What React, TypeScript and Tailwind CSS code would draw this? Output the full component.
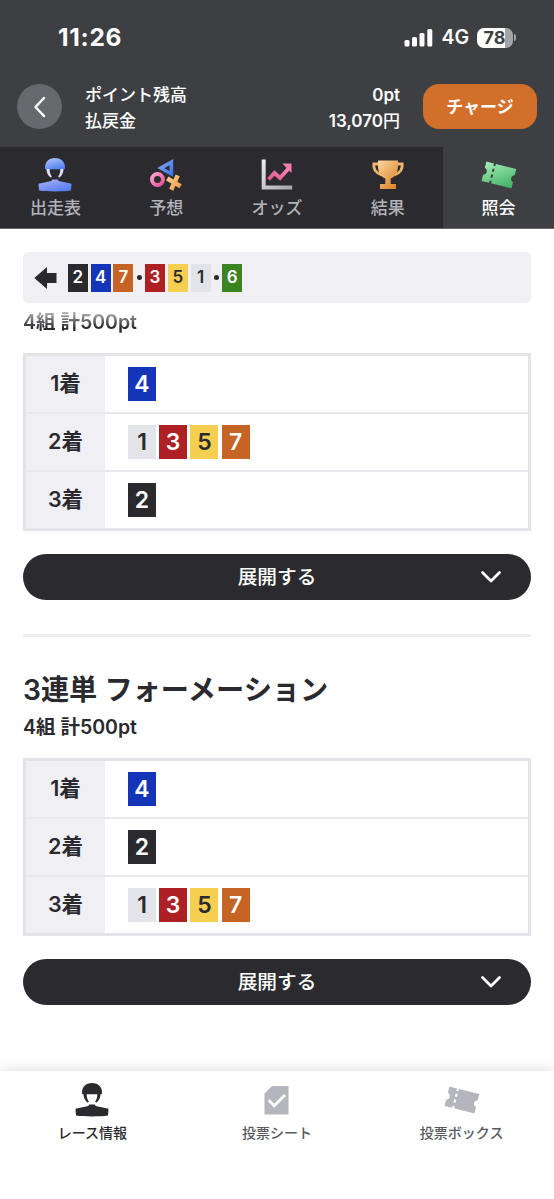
import React from "react";

const tileColors: Record<number, string> = {
  1: "bg-[#e3e4e9] text-[#2a2a2e]",
  2: "bg-[#2a2a2e] text-white",
  3: "bg-[#ae2023] text-white",
  4: "bg-[#1535b8] text-white",
  5: "bg-[#f4cf50] text-[#2a2a2e]",
  6: "bg-[#3a8421] text-white",
  7: "bg-[#c66425] text-white",
};

function Tile({ n, small }: { n: number; small?: boolean }) {
  const size = small ? "h-7 w-5 text-[17px]" : "h-[34px] w-7 text-[23px]";
  return (
    <span className={`flex shrink-0 items-center justify-center font-semibold leading-none ${size} ${tileColors[n]}`}>
      {n}
    </span>
  );
}

function Dot() {
  return <span className="mx-[0.5px] size-[5px] shrink-0 rounded-full bg-[#2a2a2e]" />;
}

const helmetPath = "M7 11.300C6.600 4.800 11 1 17 1s10.400 3.800 10 10.300c-.1.700-.6 1-1.200 1H8.200c-.6 0-1.100-.3-1.200-1Z";
const strapPath =
  "M8.500 12h3.200c-.1 3 .500 5.300 2.100 7.400l-.9 1.400C9.900 18.800 8.500 15.500 8.500 12ZM25.500 12h-3.200c.1 3-.5 5.300-2.100 7.400l.9 1.400c3-2 4.400-5.300 4.400-8.800Z";
const shirtPath = "M14.300 22.600h5.400l1 1.500L33.500 26.800 33 33.600c-8 1.200-24 1.200-32 0L.5 26.800l12.800-2.700Z";

function Racer() {
  return (
    <svg className="mb-px" width="34" height="35" viewBox="0 0 34 35" fill="#2a2a2e">
      <path d={helmetPath} />
      <path d={strapPath} />
      <path d={shirtPath} />
    </svg>
  );
}

function BlueRacer() {
  return (
    <svg className="mb-[2px]" width="34" height="35" viewBox="0 0 34 35">
      <defs>
        <linearGradient id="helmet" x1="0" y1="0" x2="0.5" y2="1">
          <stop offset="0" stopColor="#b5c8fc" />
          <stop offset="1" stopColor="#5683f0" />
        </linearGradient>
        <linearGradient id="shirt" x1="0" y1="0" x2="0.7" y2="1">
          <stop offset="0" stopColor="#adb2fa" />
          <stop offset="1" stopColor="#537cf0" />
        </linearGradient>
      </defs>
      <path fill="url(#helmet)" d={helmetPath} />
      <path fill="#dedfff" d={strapPath} />
      <path fill="url(#shirt)" d={shirtPath} />
    </svg>
  );
}

function Shapes() {
  return (
    <svg width="34" height="34" viewBox="0 0 34 34" fill="none">
      <defs>
        <linearGradient id="tri" x1="0" y1="0" x2="1" y2="1">
          <stop stopColor="#8bb4fb" />
          <stop offset="1" stopColor="#396be0" />
        </linearGradient>
        <linearGradient id="ring" x1="0" y1="0" x2="1" y2="1">
          <stop stopColor="#fda6cc" />
          <stop offset="1" stopColor="#e45298" />
        </linearGradient>
        <linearGradient id="cross" x1="0" y1="0" x2="1" y2="1">
          <stop stopColor="#fbd38b" />
          <stop offset="1" stopColor="#ed9b4a" />
        </linearGradient>
      </defs>
      <path fill="url(#tri)" fillRule="evenodd" d="M24.200 1v18L8.300 10Zm-3.700 6.300-5.200 2.900 5.200 2.900Z" />
      <circle cx="8.500" cy="21.500" r="5.500" stroke="url(#ring)" strokeWidth="4" />
      <path d="M18.300 20.500 31.600 28.200M28.700 17.400 22.200 31.700" stroke="url(#cross)" strokeWidth="4.500" />
    </svg>
  );
}

function Chart() {
  return (
    <svg width="34" height="34" viewBox="0 0 34 34" fill="none">
      <defs>
        <linearGradient id="axis" x1="0" y1="0" x2="1" y2="1">
          <stop stopColor="#ececef" />
          <stop offset="1" stopColor="#a4a4ac" />
        </linearGradient>
        <linearGradient id="rise" x1="0" y1="1" x2="1" y2="0">
          <stop stopColor="#e2568d" />
          <stop offset="1" stopColor="#fd88bd" />
        </linearGradient>
      </defs>
      <path d="M3.700 1.500V29.500h28.500" stroke="url(#axis)" strokeWidth="4" />
      <path d="m8.500 21.500 6-6.500 5.500 5L29 10" stroke="url(#rise)" strokeWidth="3.800" />
      <path d="M22.300 5.500h9.200v9.500Z" fill="#f47bb1" />
    </svg>
  );
}

function Trophy() {
  return (
    <svg width="34" height="32" viewBox="0 0 34 32" fill="none">
      <defs>
        <linearGradient id="gold" x1="0" y1="0" x2="0.8" y2="1">
          <stop stopColor="#fbd69a" />
          <stop offset="1" stopColor="#dd852e" />
        </linearGradient>
      </defs>
      <path d="M8 5H2.800c-.5 5 2 9 7.700 10.800M26 5h5.200c.5 5-2 9-7.700 10.800" stroke="#f0b66f" strokeWidth="2.800" />
      <path fill="url(#gold)" d="M7 1.500h20V7c0 6-2.500 10.800-7.300 12.500V25H25v5H9v-5h5.300v-5.500C9.500 17.800 7 13 7 7Z" />
    </svg>
  );
}

function Ticket({ green }: { green?: boolean }) {
  return (
    <svg width="36" height="30" viewBox="0 0 36 30">
      <defs>
        <linearGradient id="mint" x1="0" y1="0" x2="1" y2="1">
          <stop stopColor="#a4edb4" />
          <stop offset="1" stopColor="#3fae64" />
        </linearGradient>
      </defs>
      <path
        transform="rotate(14 18 15)"
        fill={green ? "url(#mint)" : "#b5b5be"}
        d="M2.500 5h7.800v2.500h2V5h21v6.500a3.600 3.600 0 0 0 0 7V25h-21v-2.500h-2V25H2.500v-6.500a3.600 3.600 0 0 0 0-7Zm7.800 5.200v3.200h2v-3.200Zm0 6v3.200h2v-3.200Z"
      />
    </svg>
  );
}

function Sheet() {
  return (
    <svg width="25" height="30" viewBox="0 0 25 30">
      <path fill="#b5b5be" d="M8 1h16.500v28.500H.5V8.500Z" />
      <path d="m4.500 15 5.700 5.700L21 10" fill="none" stroke="white" strokeWidth="2.800" />
    </svg>
  );
}

const tabs = [
  { label: "出走表", icon: <BlueRacer /> },
  { label: "予想", icon: <Shapes /> },
  { label: "オッズ", icon: <Chart /> },
  { label: "結果", icon: <Trophy /> },
  { label: "照会", icon: <Ticket green />, active: true },
];

const navItems = [
  { label: "レース情報", icon: <Racer />, active: true },
  { label: "投票シート", icon: <Sheet /> },
  { label: "投票ボックス", icon: <Ticket /> },
];

function BetTable({ rows }: { rows: number[][] }) {
  return (
    <div className="flex h-[178px] shrink-0 flex-col divide-y-2 divide-[#e8e8ed] border-[3px] border-[#e3e3e9]">
      {rows.map((row, i) => (
        <div key={i} className="flex flex-1">
          <div className="flex w-[79px] items-center justify-center bg-[#f0eff4] text-[21.500px] font-semibold leading-none">
            {i + 1}着
          </div>
          <div className="flex items-center gap-[3.200px] pl-[23px]">
            {row.map((n) => (
              <Tile key={n} n={n} />
            ))}
          </div>
        </div>
      ))}
    </div>
  );
}

function ExpandButton() {
  return (
    <button className="relative mt-[23px] flex h-[46px] w-full shrink-0 items-center justify-center rounded-full bg-[#2b2b2f] pt-px text-[19.700px] font-medium leading-none text-white">
      展開する
      <svg className="absolute right-[29px] top-[16px]" width="22" height="14" viewBox="0 0 22 14" fill="none">
        <path d="m2.500 2.500 8.500 8.500 8.500-8.500" stroke="white" strokeWidth="2.800" strokeLinecap="round" strokeLinejoin="round" />
      </svg>
    </button>
  );
}

export default function App() {
  return (
    <div className="flex h-[1199px] w-[554px] flex-col overflow-hidden bg-white font-['Inter','Noto_Sans_CJK_JP',sans-serif] text-[#2a2a2e]">
      <header className="shrink-0 bg-[#3e3f43] text-white">
        <div className="flex h-[74px] items-center justify-between pl-[58px] pr-[38px] pt-px">
          <span className="text-[24.500px] font-bold leading-none tracking-[0.700px]">11:26</span>
          <div className="flex items-center">
            <svg width="29" height="19" viewBox="0 0 29 19" fill="white">
              <rect x="0.500" y="12" width="5" height="6.500" rx="1.500" />
              <rect x="8" y="9" width="5" height="9.500" rx="1.500" />
              <rect x="15.500" y="5" width="5" height="13.500" rx="1.500" />
              <rect x="23.300" y="1" width="5" height="17.500" rx="1.500" />
            </svg>
            <span className="ml-2 text-[19.500px] font-semibold leading-none">4G</span>
            <span className="ml-[8px] flex h-5 w-9 items-center justify-center rounded-[7px] bg-linear-to-r from-white from-78% to-[#a4a4a7] to-78% pr-px text-[18px] font-bold leading-none text-[#3e3f43]">
              78
            </span>
            <span className="ml-px h-[7px] w-[2px] rounded-r-full bg-[#a4a4a7]" />
          </div>
        </div>
        <div className="flex h-[73px] items-start pl-[17px] pr-[17px] pt-[10px]">
          <button className="flex size-[45px] items-center justify-center rounded-full bg-[#68696e]">
            <svg width="14" height="22" viewBox="0 0 14 22" fill="none">
              <path d="M11 2 2.500 11l8.500 9" stroke="white" strokeWidth="2.500" strokeLinecap="round" strokeLinejoin="round" />
            </svg>
          </button>
          <div className="-mt-[2px] ml-[23px] flex flex-1 flex-col text-[17px] font-medium leading-[26px]">
            <div className="flex justify-between">
              <span>ポイント残高</span>
              <span className="font-semibold">0pt</span>
            </div>
            <div className="flex justify-between">
              <span>払戻金</span>
              <span>
                <span className="font-semibold">13,070</span>円
              </span>
            </div>
          </div>
          <button className="ml-[23px] flex h-[45px] w-[114px] items-center justify-center rounded-[16px] bg-[#d2702b] pt-px text-[17px] font-bold leading-none">
            チャージ
          </button>
        </div>
        <nav className="grid h-[82px] grid-cols-5 border-b border-[#69696d] bg-[#2b2b2f]">
          {tabs.map((t) => (
            <div key={t.label} className={`flex flex-col items-center text-[17px] font-medium ${t.active ? "bg-[#3e3f43] text-white" : "text-[#b2b2b9]"}`}>
              <div className="flex h-[50px] items-center justify-center pt-[6px]">{t.icon}</div>
              <span className="leading-[22px]">{t.label}</span>
            </div>
          ))}
        </nav>
      </header>

      <main className="flex flex-1 flex-col px-[23px] pt-[23px]">
        <div className="flex h-[51px] shrink-0 items-center gap-[2.800px] rounded-[5px] bg-[#f0eff4] pl-[11px]">
          <svg className="mr-[8px]" width="23" height="22" viewBox="0 0 23 22">
            <path fill="#2a2a2e" d="M.3 11 13 0v6h9.500v10H13v6Z" />
          </svg>
          <Tile n={2} small />
          <Tile n={4} small />
          <Tile n={7} small />
          <Dot />
          <Tile n={3} small />
          <Tile n={5} small />
          <Tile n={1} small />
          <Dot />
          <Tile n={6} small />
        </div>
        <div className="mb-[17px] mt-[6px] flex h-[27px] shrink-0 items-center">
          <span className="bg-linear-to-b from-[#a2a2a5] from-20% to-[#2a2a2e] to-70% bg-clip-text text-[19.500px] font-semibold leading-[27px] text-transparent">
            4組 計500pt
          </span>
        </div>
        <BetTable rows={[[4], [1, 3, 5, 7], [2]]} />
        <ExpandButton />
        <hr className="mt-[34px] h-[3px] shrink-0 border-0 bg-[#eeeef2]" />
        <h1 className="mt-[33px] h-10 whitespace-nowrap text-[28.200px] font-semibold leading-10">3連単 フォーメーション</h1>
        <p className="mb-[17px] mt-[4px] h-[27px] text-[19.500px] font-semibold leading-[27px]">4組 計500pt</p>
        <BetTable rows={[[4], [2], [1, 3, 5, 7]]} />
        <ExpandButton />
      </main>

      <footer className="grid h-[128px] shrink-0 grid-cols-3 bg-white shadow-[0_-2px_12px_rgba(0,0,0,0.12)]">
        {navItems.map((n) => (
          <div key={n.label} className={`flex flex-col items-center text-[14px] font-medium ${n.active ? "text-[#2a2a2e]" : "text-[#59595f]"}`}>
            <div className="flex h-[52px] items-center justify-center pt-[5px]">{n.icon}</div>
            <span className="leading-5">{n.label}</span>
          </div>
        ))}
      </footer>
    </div>
  );
}
